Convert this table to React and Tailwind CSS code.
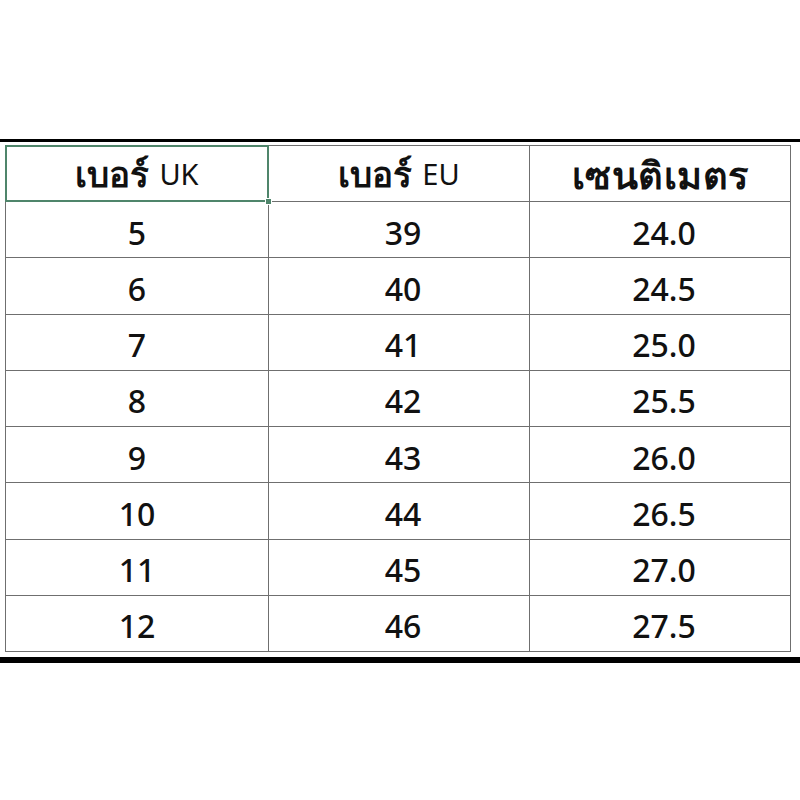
import React from "react";

const rows = [
  ["5", "39", "24.0"],
  ["6", "40", "24.5"],
  ["7", "41", "25.0"],
  ["8", "42", "25.5"],
  ["9", "43", "26.0"],
  ["10", "44", "26.5"],
  ["11", "45", "27.0"],
  ["12", "46", "27.5"],
];

const font = { fontFamily: '"Noto Sans", "DejaVu Sans", "Liberation Sans", sans-serif' };

const App = () => {
  return (
    <div className="w-[800px] h-[800px] bg-white flex flex-col" style={font}>
      <div className="h-[139px]" />
      <div className="h-[3px] bg-black" />
      <div className="h-[3px]" />

      <div className="ml-[5px] w-[786px] border-l border-t border-[#6f6f6f] text-[#111]">
        {/* header */}
        <div className="grid grid-cols-[263px_261px_261px] h-[56px]">
          <div className="relative flex items-center justify-center border-r border-b border-[#6f6f6f]">
            <div className="absolute -left-px -top-px -right-px -bottom-px border-2 border-solid border-[#4f856b]" />
            <div className="absolute -right-[4px] -bottom-[4px] w-[7px] h-[7px] bg-[#4f856b] border border-white" />
            <span className="text-[35px] font-bold leading-none">เบอร์</span>
            <span className="ml-[10px] text-[29px] leading-none">UK</span>
          </div>
          <div className="flex items-center justify-center border-r border-b border-[#6f6f6f]">
            <span className="text-[35px] font-bold leading-none">เบอร์</span>
            <span className="ml-[10px] text-[29px] leading-none">EU</span>
          </div>
          <div className="flex items-center justify-center border-r border-b border-[#6f6f6f]">
            <span className="text-[38px] font-bold leading-none tracking-[0.5px]">เซนติเมตร</span>
          </div>
        </div>

        {rows.map((r) => (
          <div key={r[0]} className="grid grid-cols-[263px_261px_261px] h-[56.25px]">
            {r.map((v, i) => (
              <div
                key={i}
                className="flex items-center justify-center pt-[6px] border-r border-b border-[#6f6f6f] text-[32px] font-medium leading-none"
              >
                <span className={i === 0 ? "" : "ml-[8px]"}>{v}</span>
              </div>
            ))}
          </div>
        ))}
      </div>

      <div className="h-[5px]" />
      <div className="h-[6px] bg-black" />
    </div>
  );
};

export default App;
